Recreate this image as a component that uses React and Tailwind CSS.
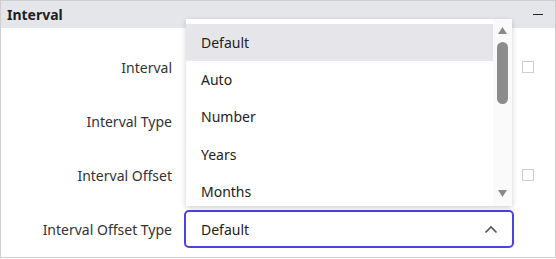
import React from "react";

const rows = [
  { label: "Interval", check: true },
  { label: "Interval Type", check: false },
  { label: "Interval Offset", check: true },
  { label: "Interval Offset Type", check: false, select: true },
];

const options = ["Default", "Auto", "Number", "Years", "Months"];

function Popup() {
  return (
    <div className="absolute left-[185px] top-[18px] w-[326px] h-[187px] bg-white shadow-[0_2px_6px_rgba(0,0,0,0.18)] flex">
      <div className="flex-1 pt-[5px]">
        {options.map((o, i) => (
          <div
            key={o}
            className={
              "h-[37.3px] flex items-center pl-[15px] pb-[1px] text-[14px] text-[#222]" +
              (i === 0 ? " bg-[#e6e6ea]" : "")
            }
          >
            {o}
          </div>
        ))}
      </div>
      <div className="w-[19px] bg-[#fafafa] flex flex-col items-center pt-[8px]">
        <svg width="9" height="7" viewBox="0 0 9 7">
          <path d="M4.5 0 L9 7 L0 7 Z" fill="#8a8a8a" />
        </svg>
        <div className="mt-[8px] w-[11px] h-[62px] rounded-full bg-[#8c8c8c]" />
        <div className="flex-1" />
        <svg width="9" height="7" viewBox="0 0 9 7" className="mb-[9px]">
          <path d="M0 0 L9 0 L4.5 7 Z" fill="#8a8a8a" />
        </svg>
      </div>
    </div>
  );
}

export default function App() {
  return (
    <div
      className="relative w-[556px] h-[258px] border border-[#cfcfcf] bg-white overflow-hidden"
      style={{ fontFamily: '"Noto Sans", "Open Sans", sans-serif' }}
    >
      <div className="h-[27px] bg-[#e5e6ea] flex items-center justify-between pl-[6px] pr-[12px]">
        <span className="text-[14px] font-bold text-[#1f1f1f]">Interval</span>
        <div className="w-[10px] h-[1.5px] bg-[#1e2233]" />
      </div>
      <div className="pt-[12px]">
        {rows.map((r) => (
          <div key={r.label} className="h-[54px] flex items-center">
            <div className="w-[171px] text-right text-[14px] text-[#333]">{r.label}</div>
            <div className="ml-[12px] w-[330px]">
              {r.select ? (
                <div className="h-[38px] border-2 border-[#4a44e0] rounded-[5px] flex items-center justify-between pl-[15px] pr-[14px] text-[14px] text-[#222]">
                  <span>Default</span>
                  <svg width="14" height="9" viewBox="0 0 14 9">
                    <path d="M1.5 7.5 L7 2 L12.5 7.5" fill="none" stroke="#555" strokeWidth="1.6" />
                  </svg>
                </div>
              ) : (
                <div className="h-[38px]" />
              )}
            </div>
            {r.check && (
              <div className="ml-[8px] w-[12px] h-[12px] border border-[#cdcdd3] bg-white" />
            )}
          </div>
        ))}
      </div>
      <Popup />
    </div>
  );
}
